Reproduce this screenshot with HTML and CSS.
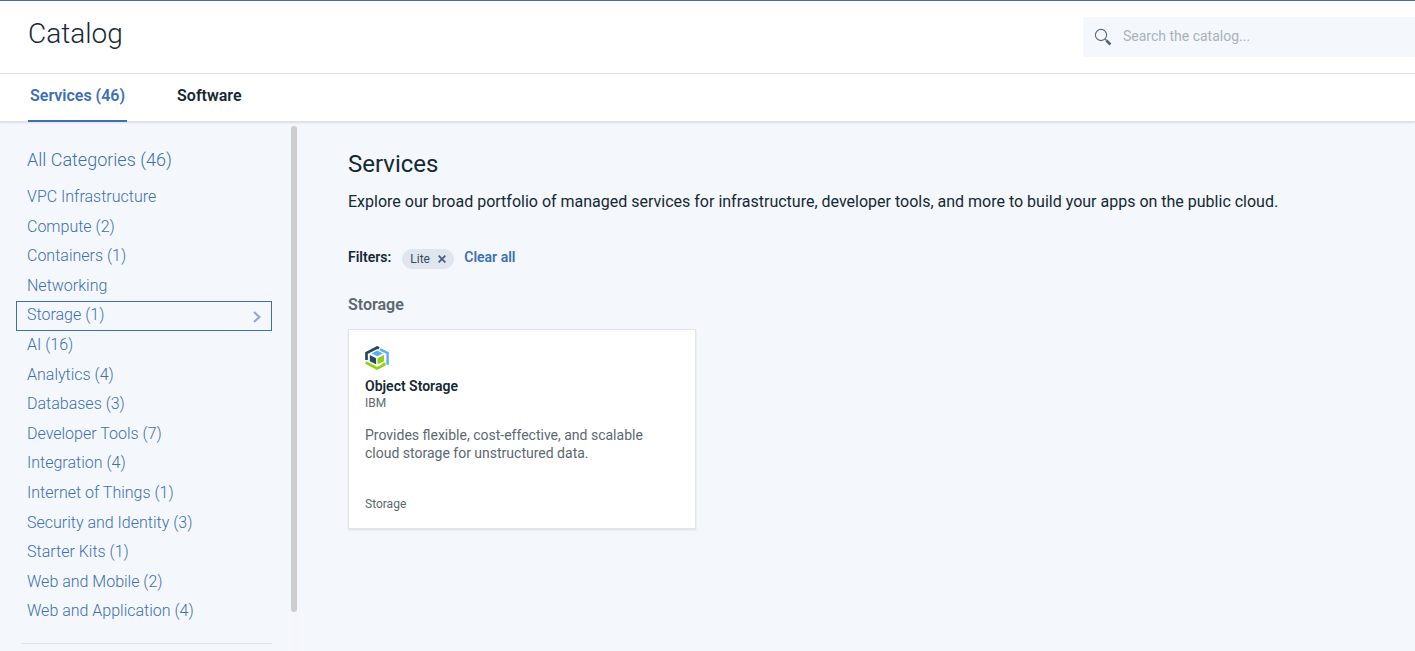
FILE: index.html
```html
<!DOCTYPE html>
<html lang="en">
<head>
<meta charset="utf-8">
<title>Catalog</title>
<link rel="stylesheet" href="styles.css">
</head>
<body>
<div class="page">
  <header class="header">
    <h1 class="header-title">Catalog</h1>
    <label class="search">
      <svg class="search-icon" width="18" height="18" viewBox="0 0 18 18" aria-hidden="true">
        <circle cx="7" cy="7" r="5.6" fill="none" stroke="#5a6872" stroke-width="1.1"/>
        <path d="M11 11l1.5 1.5" stroke="#5a6872" stroke-width="1.2"/>
        <path d="M12.4 12.4l4 4" stroke="#5a6872" stroke-width="2.8"/>
      </svg>
      <input class="search-input" type="text" placeholder="Search the catalog..." aria-label="Search the catalog">
    </label>
  </header>
  <nav class="tabs" aria-label="Catalog sections">
    <a class="tab tab-active" href="#services">Services (46)</a>
    <a class="tab" href="#software">Software</a>
  </nav>
  <div class="body">
    <aside class="sidebar">
      <nav class="categories" aria-label="Categories">
        <a class="all" href="#all">All Categories (46)</a>
        <ul class="list">
          <li><a class="item" href="#vpc">VPC Infrastructure</a></li>
          <li><a class="item" href="#compute">Compute (2)</a></li>
          <li><a class="item" href="#containers">Containers (1)</a></li>
          <li><a class="item" href="#networking">Networking</a></li>
          <li><a class="item item-selected" href="#storage">Storage (1)
            <svg width="8" height="12" viewBox="0 0 8 12" aria-hidden="true"><path d="M1 1l5.400 5L1 11" fill="none" stroke="#8eaad4" stroke-width="2.200"/></svg></a></li>
          <li><a class="item" href="#ai">AI (16)</a></li>
          <li><a class="item" href="#analytics">Analytics (4)</a></li>
          <li><a class="item" href="#databases">Databases (3)</a></li>
          <li><a class="item" href="#devtools">Developer Tools (7)</a></li>
          <li><a class="item" href="#integration">Integration (4)</a></li>
          <li><a class="item" href="#iot">Internet of Things (1)</a></li>
          <li><a class="item" href="#security">Security and Identity (3)</a></li>
          <li><a class="item" href="#kits">Starter Kits (1)</a></li>
          <li><a class="item" href="#mobile">Web and Mobile (2)</a></li>
          <li><a class="item" href="#apps">Web and Application (4)</a></li>
        </ul>
        <hr class="divider">
      </nav>
      <div class="scroll-track"><div class="scroll-thumb"></div></div>
    </aside>
    <main class="main">
      <h2 class="main-title">Services</h2>
      <p class="intro">Explore our broad portfolio of managed services for infrastructure, developer tools, and more to build your apps on the public cloud.</p>
      <div class="filters">
        <span class="filters-label">Filters:</span>
        <span class="tag">Lite
          <button class="tag-close" type="button" aria-label="Remove Lite filter">
            <svg width="8" height="8" viewBox="0 0 8 8" aria-hidden="true"><path d="M.6.6l6.8 6.8M7.4.6L.6 7.4" stroke="#4c5d82" stroke-width="1.8"/></svg>
          </button>
        </span>
        <button class="clear" type="button">Clear all</button>
      </div>
      <h3 class="group-title">Storage</h3>
      <a class="card" href="#object-storage">
        <svg class="card-icon" width="24" height="24" viewBox="0 0 24 24" aria-hidden="true">
          <path d="M1.500 14V7L12.200 1.500l1.900.8" fill="none" stroke="#264a60" stroke-width="2.700"/>
          <path d="M15 3.400l7.600 3.600V18.800" fill="none" stroke="#5aaafa" stroke-width="2.400"/>
          <path d="M.6 16.400l11.400 6 7.200-3.700v-2" fill="none" stroke="#8cd211" stroke-width="2.700"/>
          <path d="M12.200 4.600l5.600 2.800-5.600 2.900-5.600-2.900z" fill="#5aaafa"/>
          <path d="M4.800 9.100l6.300 3.100v6L4.800 15.200z" fill="#264a60"/>
          <path d="M19 9.100l-6.500 3.100v6l6.500-3z" fill="#8cd211"/>
        </svg>
        <strong class="card-name">Object Storage</strong>
        <span class="card-small">IBM</span>
        <span class="card-text">Provides flexible, cost-effective, and scalable cloud storage for unstructured data.</span>
        <span class="card-small card-foot">Storage</span>
      </a>
    </main>
  </div>
</div>
</body>
</html>
```
FILE: styles.css
```css
* { box-sizing: border-box; }
body {
  margin: 0;
  background: #f4f7fb;
  color: #152935;
  font-family: Roboto, "Liberation Sans", sans-serif;
  font-size: 16px;
}
a { text-decoration: none; color: #4178be; }
button { border: 0; padding: 0; background: none; font: inherit; cursor: pointer; }
.page { display: flex; flex-direction: column; min-height: 100vh; }
.header {
  display: flex;
  justify-content: space-between;
  align-items: center;
  height: 74px;
  padding-left: 28px;
  background: #fff;
  border-top: 1px solid #3d70b2;
  border-bottom: 1px solid #dfe3e6;
}
.header-title { margin: 0 0 6px; font-size: 28px; line-height: 36px; font-weight: 300; }
.search {
  display: flex;
  align-items: center;
  gap: 11px;
  width: 332px;
  height: 40px;
  padding-left: 11px;
  background: #f4f7fb;
}
.search-input {
  flex: 1;
  min-width: 0;
  border: 0;
  padding: 0 0 2px;
  background: none;
  font: 400 14px/20px Roboto, "Liberation Sans", sans-serif;
}
.search-input::placeholder { color: #a9b2ba; }
.tabs {
  display: flex;
  gap: 48px;
  height: 48px;
  padding-left: 28px;
  background: #fff;
  border-bottom: 1px solid #dcdfe3;
  box-shadow: 0 1px 2px rgba(0, 0, 0, .1);
  z-index: 1;
}
.tab { padding: 10px 2px 0; line-height: 24px; font-weight: 600; color: #152935; }
.tab-active { margin-bottom: -1px; color: #3d70b2; border-bottom: 2px solid #3d70b2; }
.body { flex: 1; display: flex; }
.sidebar { display: flex; flex: none; width: 300px; }
.categories { flex: 1; padding: 26px 19px 0 16px; }
.all { display: block; padding-left: 11px; font-size: 18px; line-height: 24px; font-weight: 300; color: #3d70b2; }
.list {
  display: grid;
  grid-template-rows: repeat(15, minmax(0, 1fr));
  height: 444px;
  margin: 11px 0 0;
  padding: 0;
  list-style: none;
}
.item {
  display: flex;
  justify-content: space-between;
  align-items: center;
  height: 30px;
  padding: 0 10px 3px;
  border: 1px solid transparent;
  font-weight: 300;
  color: #3d70b2;
}
.item svg { margin-top: 4px; }
.item-selected { border-color: #3d70b2; }
.divider { margin: 16px 0 0 6px; border: 0; border-top: 1px solid #dfe3e6; }
.scroll-track { width: 9px; padding-top: 4px; background: #f4f6fb; }
.scroll-thumb { width: 6px; height: 486px; border-radius: 3px; background: #cdcdcd; }
.main { flex: 1; min-width: 0; padding: 26px 48px 0; }
.main-title { margin: 0; font-size: 24px; line-height: 32px; font-weight: 400; }
.intro { margin: 10px 0 0; line-height: 24px; }
.filters { display: flex; align-items: center; height: 24px; margin-top: 31px; font-size: 14px; font-weight: 600; }
.filters-label { margin-right: 11px; }
.tag {
  display: flex;
  align-items: center;
  justify-content: space-between;
  width: 52px;
  height: 20px;
  margin: 3px 10px 0 0;
  padding: 0 8px;
  border-radius: 10px;
  background: #dfe6ef;
  color: #394b59;
  font-size: 12px;
  font-weight: 400;
}
.tag-close { display: flex; }
.clear { color: #3d70b2; }
.group-title { margin: 24px 0 12px; font-size: 16px; line-height: 24px; font-weight: 600; color: #5a6872; }
.card {
  display: flex;
  flex-direction: column;
  max-width: 348px;
  min-height: 200px;
  padding: 16px;
  background: #fff;
  border: 1px solid #dfe6eb;
  box-shadow: 0 1px 2px rgba(0, 0, 0, .1);
  color: #5a6872;
}
.card-name { margin-top: 7px; font-size: 14px; line-height: 18px; font-weight: 600; color: #152935; }
.card-small { font-size: 12px; line-height: 16px; }
.card-text { margin-top: 15px; font-size: 14px; line-height: 18px; }
.card-foot { margin-top: auto; }
```
